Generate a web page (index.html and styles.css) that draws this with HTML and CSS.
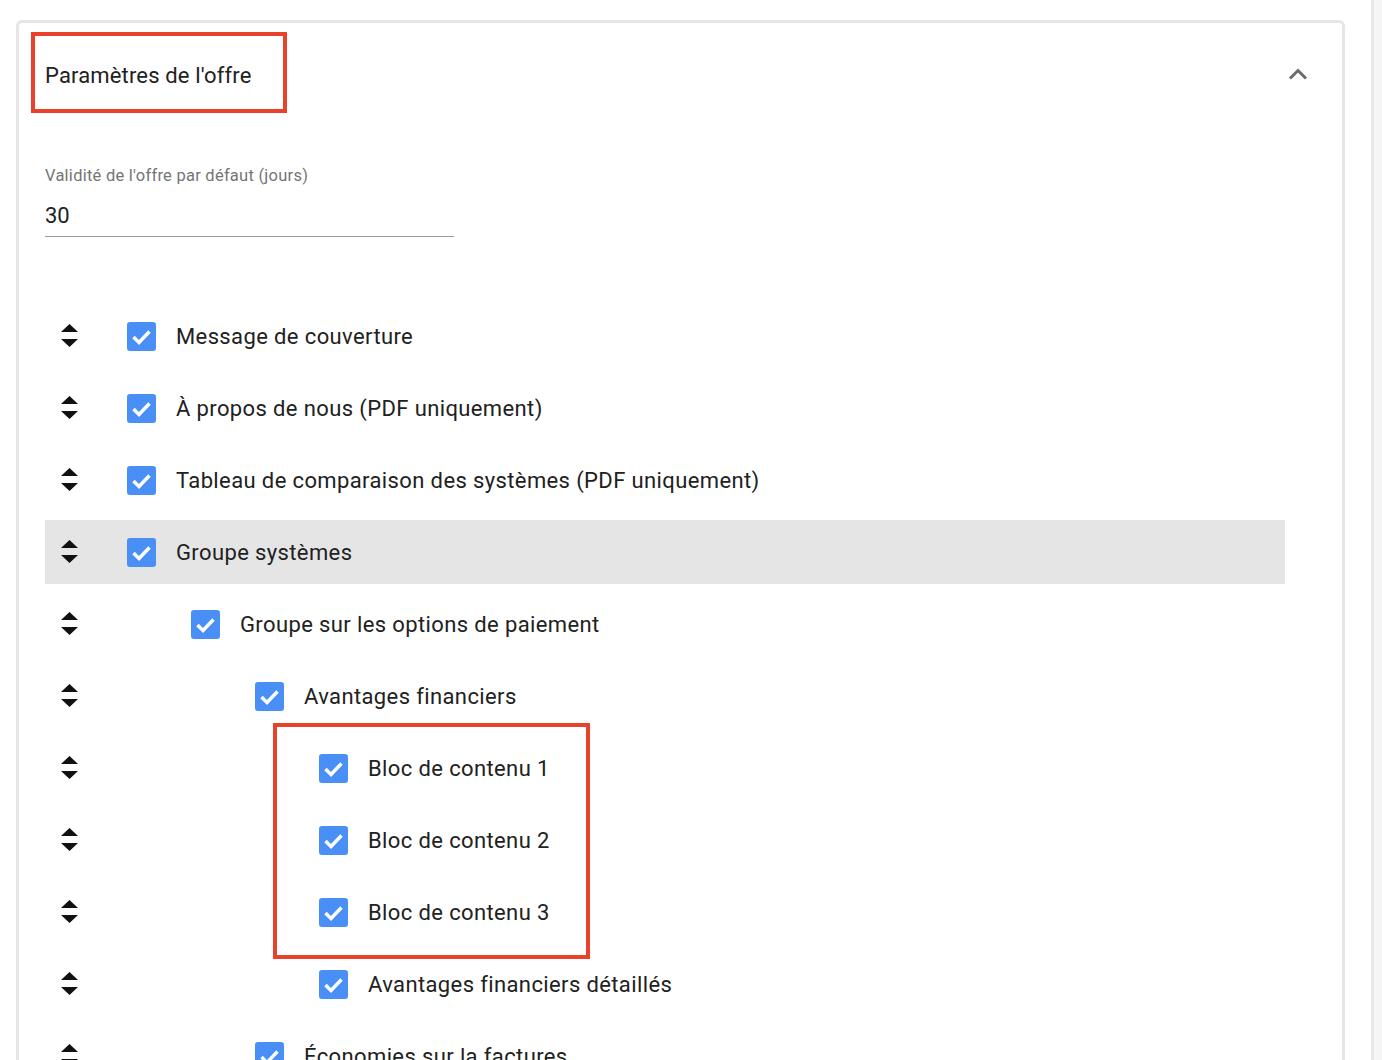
FILE: index.html
```html
<!DOCTYPE html>
<html lang="fr">
<head>
    <meta charset="UTF-8">
    <meta name="viewport" content="width=device-width, initial-scale=1.0">
    <title>Paramètres de l'offre</title>
    <link rel="stylesheet" href="styles.css">
</head>
<body>
    <div class="page">
        <div class="main">
            <div class="card">
                <div class="card-head">
                    <span class="card-title">Paramètres de l'offre</span>
                    <svg class="chevron" width="20" height="12" viewBox="0 0 20 12"><polyline points="2,10.5 10,2.5 18,10.5" fill="none" stroke="#6b6b6b" stroke-width="3"/></svg>
                </div>

                <div class="field">
                    <label class="field-label">Validité de l'offre par défaut (jours)</label>
                    <div class="field-value">30</div>
                </div>

                <div class="list">
                    <div class="row">
                        <span class="handle"><svg width="17" height="24" viewBox="0 0 17 24"><polygon points="0,8 8.5,0 17,8"/><polygon points="0,15 17,15 8.5,23"/></svg></span>
                        <span class="item lvl1"><span class="check"><svg width="29" height="29" viewBox="0 0 29 29"><polyline points="6.5,15 12,20.5 22.5,9.5" fill="none" stroke="#fff" stroke-width="3.4"/></svg></span>Message de couverture</span>
                    </div>
                    <div class="row">
                        <span class="handle"><svg width="17" height="24" viewBox="0 0 17 24"><polygon points="0,8 8.5,0 17,8"/><polygon points="0,15 17,15 8.5,23"/></svg></span>
                        <span class="item lvl1"><span class="check"><svg width="29" height="29" viewBox="0 0 29 29"><polyline points="6.5,15 12,20.5 22.5,9.5" fill="none" stroke="#fff" stroke-width="3.4"/></svg></span>À propos de nous (PDF uniquement)</span>
                    </div>
                    <div class="row">
                        <span class="handle"><svg width="17" height="24" viewBox="0 0 17 24"><polygon points="0,8 8.5,0 17,8"/><polygon points="0,15 17,15 8.5,23"/></svg></span>
                        <span class="item lvl1"><span class="check"><svg width="29" height="29" viewBox="0 0 29 29"><polyline points="6.5,15 12,20.5 22.5,9.5" fill="none" stroke="#fff" stroke-width="3.4"/></svg></span>Tableau de comparaison des systèmes (PDF uniquement)</span>
                    </div>
                    <div class="row active">
                        <span class="handle"><svg width="17" height="24" viewBox="0 0 17 24"><polygon points="0,8 8.5,0 17,8"/><polygon points="0,15 17,15 8.5,23"/></svg></span>
                        <span class="item lvl1"><span class="check"><svg width="29" height="29" viewBox="0 0 29 29"><polyline points="6.5,15 12,20.5 22.5,9.5" fill="none" stroke="#fff" stroke-width="3.4"/></svg></span>Groupe systèmes</span>
                    </div>
                    <div class="row">
                        <span class="handle"><svg width="17" height="24" viewBox="0 0 17 24"><polygon points="0,8 8.5,0 17,8"/><polygon points="0,15 17,15 8.5,23"/></svg></span>
                        <span class="item lvl2"><span class="check"><svg width="29" height="29" viewBox="0 0 29 29"><polyline points="6.5,15 12,20.5 22.5,9.5" fill="none" stroke="#fff" stroke-width="3.4"/></svg></span>Groupe sur les options de paiement</span>
                    </div>
                    <div class="row">
                        <span class="handle"><svg width="17" height="24" viewBox="0 0 17 24"><polygon points="0,8 8.5,0 17,8"/><polygon points="0,15 17,15 8.5,23"/></svg></span>
                        <span class="item lvl3"><span class="check"><svg width="29" height="29" viewBox="0 0 29 29"><polyline points="6.5,15 12,20.5 22.5,9.5" fill="none" stroke="#fff" stroke-width="3.4"/></svg></span>Avantages financiers</span>
                    </div>
                    <div class="row">
                        <span class="handle"><svg width="17" height="24" viewBox="0 0 17 24"><polygon points="0,8 8.5,0 17,8"/><polygon points="0,15 17,15 8.5,23"/></svg></span>
                        <span class="item lvl4"><span class="check"><svg width="29" height="29" viewBox="0 0 29 29"><polyline points="6.5,15 12,20.5 22.5,9.5" fill="none" stroke="#fff" stroke-width="3.4"/></svg></span>Bloc de contenu 1</span>
                    </div>
                    <div class="row">
                        <span class="handle"><svg width="17" height="24" viewBox="0 0 17 24"><polygon points="0,8 8.5,0 17,8"/><polygon points="0,15 17,15 8.5,23"/></svg></span>
                        <span class="item lvl4"><span class="check"><svg width="29" height="29" viewBox="0 0 29 29"><polyline points="6.5,15 12,20.5 22.5,9.5" fill="none" stroke="#fff" stroke-width="3.4"/></svg></span>Bloc de contenu 2</span>
                    </div>
                    <div class="row">
                        <span class="handle"><svg width="17" height="24" viewBox="0 0 17 24"><polygon points="0,8 8.5,0 17,8"/><polygon points="0,15 17,15 8.5,23"/></svg></span>
                        <span class="item lvl4"><span class="check"><svg width="29" height="29" viewBox="0 0 29 29"><polyline points="6.5,15 12,20.5 22.5,9.5" fill="none" stroke="#fff" stroke-width="3.4"/></svg></span>Bloc de contenu 3</span>
                    </div>
                    <div class="row">
                        <span class="handle"><svg width="17" height="24" viewBox="0 0 17 24"><polygon points="0,8 8.5,0 17,8"/><polygon points="0,15 17,15 8.5,23"/></svg></span>
                        <span class="item lvl4"><span class="check"><svg width="29" height="29" viewBox="0 0 29 29"><polyline points="6.5,15 12,20.5 22.5,9.5" fill="none" stroke="#fff" stroke-width="3.4"/></svg></span>Avantages financiers détaillés</span>
                    </div>
                    <div class="row">
                        <span class="handle"><svg width="17" height="24" viewBox="0 0 17 24"><polygon points="0,8 8.5,0 17,8"/><polygon points="0,15 17,15 8.5,23"/></svg></span>
                        <span class="item lvl3"><span class="check"><svg width="29" height="29" viewBox="0 0 29 29"><polyline points="6.5,15 12,20.5 22.5,9.5" fill="none" stroke="#fff" stroke-width="3.4"/></svg></span>Économies sur la factures</span>
                    </div>
                </div>
            </div>
        </div>
        <div class="side"></div>

        <!-- annotations -->
        <div class="mark mark-title"></div>
        <div class="mark mark-blocks"></div>
    </div>
</body>
</html>
```

FILE: styles.css
```css
html, body {
    margin: 0;
    height: 1060px;
    overflow: hidden;
    background: #fff;
}
body {
    font-family: Roboto, "Liberation Sans", sans-serif;
    color: #212121;
}

.page {
    position: relative;
    display: flex;
    height: 1060px;
}
.main {
    flex: 1;
    padding: 20px 26px 0 16px;
}
.side {
    width: 8px;
    border-left: 3px solid #e8e8e8;
    background: #f5f5f5;
}

.card {
    border: 3px solid #e6e6e6;
    border-bottom: none;
    border-radius: 6px 6px 0 0;
    padding: 0 34px 0 26px;
    height: 1100px;
}

.card-head {
    height: 104px;
    display: flex;
    align-items: center;
    justify-content: space-between;
}
.card-title {
    font-size: 22px;
    line-height: 28px;
    padding-top: 2px;
    letter-spacing: 0.15px;
}
.chevron {
    display: block;
    margin-top: -3px;
}

.field {
    width: 409px;
    padding-top: 39px;
}
.field-label {
    display: block;
    font-size: 16.5px;
    line-height: 20px;
    letter-spacing: 0.25px;
    color: #757575;
}
.field-value {
    font-size: 22px;
    line-height: 28px;
    margin-top: 16px;
    padding-bottom: 6px;
    border-bottom: 1px solid #9a9a9a;
}

.list {
    margin-top: 67px;
    margin-right: 23px;
}
.row {
    height: 64px;
    margin-bottom: 8px;
    display: flex;
    align-items: center;
}
.row.active {
    background: #e5e5e5;
}
.handle {
    width: 48px;
    display: flex;
    justify-content: center;
}
.handle svg {
    display: block;
    fill: #111;
}

.item {
    display: flex;
    align-items: center;
    font-size: 22px;
    letter-spacing: 0.38px;
}
.lvl1 { margin-left: 34px; }
.lvl2 { margin-left: 98px; }
.lvl3 { margin-left: 162px; }
.lvl4 { margin-left: 226px; }

.check {
    width: 29px;
    height: 29px;
    border-radius: 3px;
    background: #4a8ff5;
    margin-right: 20px;
}
.check svg {
    display: block;
}

.mark {
    position: absolute;
    border: 4px solid #e8432a;
}
.mark-title {
    left: 31px;
    top: 32px;
    width: 248px;
    height: 73px;
}
.mark-blocks {
    left: 273px;
    top: 723px;
    width: 309px;
    height: 228px;
}
```
